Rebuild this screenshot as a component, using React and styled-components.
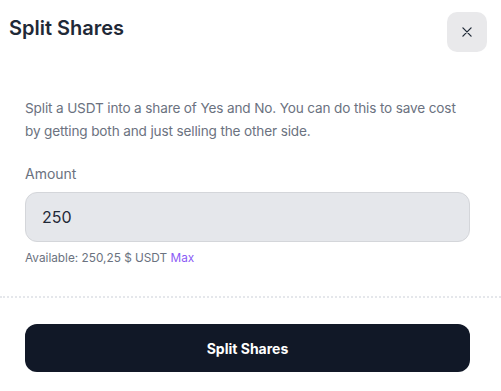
import React, { useState } from "react";
import styled, { createGlobalStyle } from "styled-components";

const GlobalStyle = createGlobalStyle`
  html, body {
    margin: 0;
    padding: 0;
    background: #ffffff;
  }
  body {
    font-family: Inter, "Noto Sans", sans-serif;
    color: #1f2937;
  }
`;

const Modal = styled.div`
  width: 501px;
  height: 391px;
  background: #ffffff;
  display: flex;
  flex-direction: column;
  overflow: hidden;
`;

const Header = styled.div`
  display: flex;
  justify-content: space-between;
  align-items: flex-start;
  padding: 12px 14px 0 9px;
`;

const Title = styled.h2`
  margin: 0;
  padding-top: 4px;
  font-size: 20px;
  font-weight: 600;
  color: #1f2937;
`;

const CloseButton = styled.button`
  width: 40px;
  height: 40px;
  border: none;
  border-radius: 10px;
  background: #e9e9eb;
  display: flex;
  align-items: center;
  justify-content: center;
  color: #1f2937;
  cursor: pointer;
  padding: 0;
`;

const Body = styled.div`
  padding: 45px 31px 0 25px;
  display: flex;
  flex-direction: column;
`;

const Description = styled.p`
  margin: 0;
  max-width: 436px;
  font-size: 13.6px;
  letter-spacing: -0.15px;
  line-height: 23px;
  color: #6b7280;
`;

const Label = styled.label`
  margin-top: 21px;
  font-size: 14px;
  line-height: 20px;
  color: #6b7280;
`;

const Input = styled.input`
  margin-top: 8px;
  height: 50px;
  box-sizing: border-box;
  border: 1px solid #d4d6da;
  border-radius: 12px;
  background: #e5e7eb;
  padding: 0 16px;
  font-family: Inter, "Noto Sans", sans-serif;
  font-size: 16px;
  color: #1f2937;
  outline: none;
  caret-color: #111827;
`;

const Hint = styled.div`
  margin-top: 9px;
  font-size: 11.8px;
  color: #6b7280;
`;

const MaxLink = styled.span`
  color: #8b5cf6;
  cursor: pointer;
`;

const Divider = styled.div`
  margin-top: 31px;
  border-top: 2px dotted #e5e7eb;
`;

const Footer = styled.div`
  padding: 26px 31px 0 25px;
`;

const SubmitButton = styled.button`
  width: 100%;
  height: 48px;
  border: none;
  border-radius: 12px;
  background: #111827;
  color: #ffffff;
  font-family: Inter, "Noto Sans", sans-serif;
  font-size: 14px;
  font-weight: 700;
  cursor: pointer;
`;

export default function App() {
  const [amount, setAmount] = useState("250");

  return (
    <>
      <GlobalStyle />
      <Modal>
        <Header>
          <Title>Split Shares</Title>
          <CloseButton aria-label="Close">
            <svg width="14" height="14" viewBox="0 0 24 24" fill="none" stroke="currentColor" strokeWidth="2.2" strokeLinecap="round">
              <path d="M5 5l14 14M19 5L5 19" />
            </svg>
          </CloseButton>
        </Header>
        <Body>
          <Description>
            Split a USDT into a share of Yes and No. You can do this to save cost by getting both and just selling the other side.
          </Description>
          <Label htmlFor="amount">Amount</Label>
          <Input id="amount" value={amount} onChange={(e) => setAmount(e.target.value)} autoFocus />
          <Hint>
            Available: 250,25 $ USDT <MaxLink>Max</MaxLink>
          </Hint>
        </Body>
        <Divider />
        <Footer>
          <SubmitButton>Split Shares</SubmitButton>
        </Footer>
      </Modal>
    </>
  );
}
